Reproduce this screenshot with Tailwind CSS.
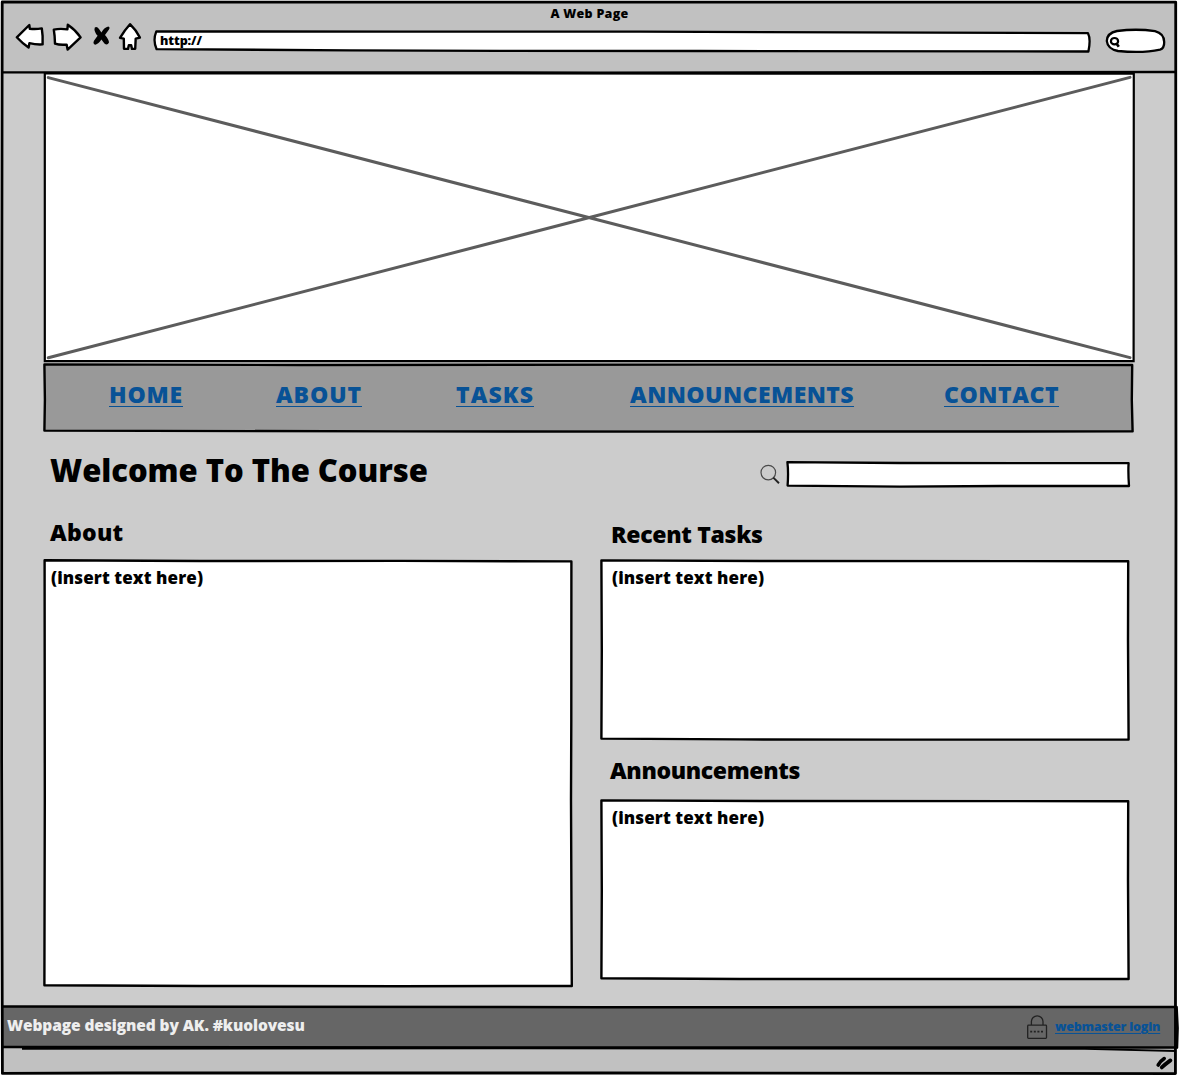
<!DOCTYPE html>
<html lang="en">
<head>
<meta charset="utf-8">
<title>A Web Page</title>
<script src="https://cdn.jsdelivr.net/npm/@tailwindcss/browser@4"></script>
</head>
<body class="bg-white">
<div class="relative flex h-[1076px] w-[1179px] flex-col overflow-hidden bg-white font-['Open_Sans','Noto_Sans',sans-serif] font-extrabold text-black">

  <!-- Browser chrome -->
  <header class="mx-[2px] mt-[2px] flex h-[70px] flex-col bg-[#c1c1c1]">
    <div class="h-[20px] text-center text-[12.5px] leading-[23px] tracking-[0.27px]">A Web Page</div>
    <div class="flex h-[50px]">
      <svg class="ml-[12px] h-[32px] w-[32px]" viewBox="14 22 32 32" fill="#fff" stroke="#000" stroke-width="2.4" stroke-linejoin="round"><path d="M16.8 37.3 L29.3 25 L29.8 28.8 Q36 29.5 41.8 28.4 L42.6 36 L42.6 44.4 Q36 44.8 29.4 43.2 L28.6 47.6 Q22 43 16.8 37.3Z"/></svg>
      <svg class="ml-[5px] h-[32px] w-[32px]" viewBox="51 22 32 32" fill="#fff" stroke="#000" stroke-width="2.4" stroke-linejoin="round"><path d="M53.8 29.6 Q60 28.3 67.4 29.4 L67.8 24.8 Q75.5 30 80.6 37.4 L67.6 49.6 L66.6 44.6 Q60 45.3 55 43.6 L54.6 36Z"/></svg>
      <svg class="ml-[8px] h-[32px] w-[20px]" viewBox="91 22 20 32"><path d="M94.8 27.4 Q97 26 99 29 L101.4 32.4 Q104.6 27.2 108.2 26.5 Q110.6 27.2 108.8 29.8 L105 35 Q109 39.6 109 42.4 Q107.4 46 104.4 43.6 L101.4 39.6 Q98.6 44 95.4 44.8 Q92.4 43.8 94 40.8 L97.6 35.8 Q93.4 31 94.8 27.4Z"/></svg>
      <svg class="ml-[6px] h-[32px] w-[26px]" viewBox="117 22 26 32" fill="#fff" stroke="#000" stroke-width="2.4" stroke-linejoin="round"><path d="M130 24.2 Q136.6 30.6 139.9 37.6 L135.7 38.6 L135.2 48.8 L132 48.9 L131.2 45.2 L128.8 45.2 L128 48.9 L124 48.7 L123.8 38.6 L120 37.8 Q124.4 30.4 130 24.2Z"/></svg>
      <div class="relative ml-[10px] mt-[8px] h-[24px] w-[940px]">
        <svg class="absolute inset-0 h-full w-full" viewBox="153 30 940 24" fill="#fff" stroke="#000" stroke-width="2.3" stroke-linejoin="round"><path d="M156.3 31.4 L400 31.7 L640 31.6 L850 32.4 L1088 33.2 Q1091 39 1088.4 51.5 L700 51 L500 50.8 L350 50.3 L156.6 49.2 Q152.6 40.5 156.3 31.4Z"/></svg>
        <div class="relative pl-[7px] text-[12.5px] leading-[21px] tracking-[-0.08px]">http://</div>
      </div>
      <svg class="ml-[11px] mt-[4px] h-[30px] w-[64px]" viewBox="1104 26 64 30" fill="#fff" stroke="#000" stroke-width="2.3" stroke-linejoin="round"><path d="M1106.8 41 Q1107 33 1117 31 Q1137 28.4 1155 31.2 Q1164 33.5 1164.2 42 Q1164.4 48.4 1160 49.6 Q1143 53.4 1118 51 Q1107.6 49 1106.8 41Z"/><ellipse cx="1114.5" cy="41.2" rx="3.6" ry="3.2" stroke-width="2.2"/><path d="M1116.4 43.4 L1118.8 46.8" stroke-width="2.6"/></svg>
    </div>
  </header>

  <!-- Page body -->
  <main class="mx-[2px] flex h-[935px] flex-col bg-[#cccccc] pl-[41px]">
    <svg class="h-[291px] w-[1094px] shrink-0" viewBox="43 72 1094 291" fill="none">
      <path d="M44.8 73.4 L1133.8 73.6 L1133.6 361.2 L44.8 361.2Z" fill="#fff" stroke="#000" stroke-width="2.2"/>
      <path d="M48.3 77.6 L1130 357.6 M48.3 357.8 L1130 77.4" stroke="#5c5c5c" stroke-width="3" stroke-linecap="round"/>
    </svg>

    <nav class="relative h-[70px] w-[1094px] shrink-0">
      <svg class="absolute inset-0 h-full w-full" viewBox="43 363 1094 70" fill="#999" stroke="#000" stroke-width="2.4" stroke-linejoin="round"><path d="M44.4 364.4 L300 365 L700 364.6 L1132.2 365 L1131.8 400 L1132.6 431.4 L700 431.6 L400 431.4 L44.4 430.6 L44.9 400Z"/></svg>
      <div class="relative grid grid-cols-[167px_180px_174px_314px_auto] pl-[66px] pt-[14px] text-[23px] leading-[34px] text-[#085296]">
        <a class="tracking-[0.8px] underline decoration-[#085296] decoration-1 underline-offset-[3px]">HOME</a>
        <a class="tracking-[0.89px] underline decoration-[#085296] decoration-1 underline-offset-[3px]">ABOUT</a>
        <a class="tracking-[1.07px] underline decoration-[#085296] decoration-1 underline-offset-[3px]">TASKS</a>
        <a class="tracking-[0.43px] underline decoration-[#085296] decoration-1 underline-offset-[3px]">ANNOUNCEMENTS</a>
        <a class="tracking-[0.54px] underline decoration-[#085296] decoration-1 underline-offset-[3px]">CONTACT</a>
      </div>
    </nav>

    <div class="flex h-[77px] shrink-0">
      <h1 class="w-[714px] shrink-0 pl-[7px] pt-[13px] text-[31px] leading-[48px] tracking-[-0.05px]">Welcome To The Course</h1>
      <svg class="mt-[28px] h-[26px] w-[26px] shrink-0" viewBox="757 461 26 26" fill="none"><circle cx="768.3" cy="472.6" r="7.3" stroke="#4a4a4a" stroke-width="1.2"/><path d="M773.3 477.6 L779 483.2" stroke="#222" stroke-width="1.9"/></svg>
      <svg class="mt-[27px] h-[30px] w-[350px] shrink-0" viewBox="783 460 350 30" fill="#fff" stroke="#000" stroke-width="2.3" stroke-linejoin="round"><path d="M787.4 462.2 L900 463 L1128.6 463.2 Q1128 472 1129 486 L1000 486 L900 486.6 L787.6 485.6 Q788.6 472 787.4 462.2Z"/></svg>
    </div>

    <div class="grid shrink-0 grid-cols-[557px_537px]">
      <section>
        <h2 class="h-[49px] pl-[7px] pt-[4px] text-[23px] leading-[36px] tracking-[0.25px]">About</h2>
        <div class="relative h-[430px] w-[531px]">
          <svg class="absolute inset-0 h-full w-full" viewBox="43 559 531 430" fill="#fff" stroke="#000" stroke-width="2.4" stroke-linejoin="round"><path d="M44.6 560.3 L200 561 L400 560.9 L571.4 561.4 L571.3 720 L571 800 L571.8 986 L400 986.2 L200 986 L44.4 985.2 L44.8 800Z"/></svg>
          <p class="relative pl-[8px] pt-[6px] text-[17px] leading-[26px] tracking-[0.1px]">(insert text here)</p>
        </div>
      </section>
      <section>
        <h2 class="h-[49px] pl-[11px] pt-[6px] text-[23px] leading-[36px] tracking-[-0.3px]">Recent Tasks</h2>
        <div class="relative h-[183px] w-[531px]">
          <svg class="absolute inset-0 h-full w-full" viewBox="600 559 531 183" fill="#fff" stroke="#000" stroke-width="2.4" stroke-linejoin="round"><path d="M601.4 560.4 L760 561 L1128.2 561.2 L1128 640 L1128.6 739.6 L900 739.6 L740 739.4 L601.4 738.6 L601.8 650Z"/></svg>
          <p class="relative pl-[12px] pt-[6px] text-[17px] leading-[26px] tracking-[0.1px]">(insert text here)</p>
        </div>
        <h2 class="h-[57px] pl-[10px] pt-[10px] text-[23px] leading-[36px] tracking-[-0.36px]">Announcements</h2>
        <div class="relative h-[183px] w-[531px]">
          <svg class="absolute inset-0 h-full w-full" viewBox="600 799 531 183" fill="#fff" stroke="#000" stroke-width="2.4" stroke-linejoin="round"><path d="M601.4 800.4 L760 801 L1128.2 801.2 L1128 880 L1128.6 979 L900 979 L740 979 L601.4 978.2 L601.8 890Z"/></svg>
          <p class="relative pl-[12px] pt-[6px] text-[17px] leading-[26px] tracking-[0.1px]">(insert text here)</p>
        </div>
      </section>
    </div>
  </main>

  <!-- Site footer -->
  <footer class="mx-[2px] flex h-[41px] items-start bg-[#666]">
    <p class="ml-[5px] w-[1018px] text-[15.5px] leading-[37px] tracking-[-0.1px] text-[#eee]">Webpage designed by AK. #kuolovesu</p>
    <svg class="mt-[6px] h-[28px] w-[24px]" viewBox="1025 1013 24 28" fill="none" stroke="#222" stroke-width="1.3"><rect x="1027.7" y="1025.2" width="18.8" height="13.2" rx="0.8"/><path d="M1031.4 1025 V1021.6 A5.8 5.8 0 0 1 1043 1021.6 V1025"/><path d="M1030.2 1031.6 H1044.4" stroke-width="1.6" stroke-dasharray="2 1.6"/></svg>
    <a class="ml-[6px] text-[12.5px] leading-[39px] tracking-[-0.22px] text-[#085296] underline decoration-[#085296] decoration-1 underline-offset-[2px]">webmaster login</a>
  </footer>

  <!-- Status bar -->
  <div class="mx-[2px] flex h-[26px] justify-end bg-[#c1c1c1]">
    <svg class="mr-[2px] mt-[5px] h-[20px] w-[20px]" viewBox="1155 1053 20 20" fill="none" stroke="#000" stroke-linecap="round"><path d="M1158.2 1065 Q1160.6 1061 1164.2 1058.6" stroke-width="3.6"/><path d="M1161.8 1067.4 Q1165 1064.4 1170.4 1060.4" stroke-width="3.8"/></svg>
  </div>

  <!-- Hand-drawn window outline -->
  <svg class="pointer-events-none absolute inset-0 h-full w-full" viewBox="0 0 1179 1076" fill="none" stroke="#000" stroke-width="2.8" stroke-linejoin="round">
    <path d="M2.2 2 L1175.7 2.2 L1176 500 L1175.4 1073.6 L600 1073 L120 1073 L2.4 1073.4 L1.6 760 L1.8 300Z"/>
    <path d="M2 72.4 L600 72.6 L1176 72" stroke-width="2.4"/>
    <path d="M2 1006.4 L600 1007.2 L1176.6 1007 L1177.6 1028 L1177 1047.6 L600 1047.6 L1.4 1047" stroke-width="2.5"/>
    <path d="M22 1048.8 L500 1048.4 L1085 1048.8 L1176 1051" stroke-width="1.8"/>
  </svg>
</div>
</body>
</html>
